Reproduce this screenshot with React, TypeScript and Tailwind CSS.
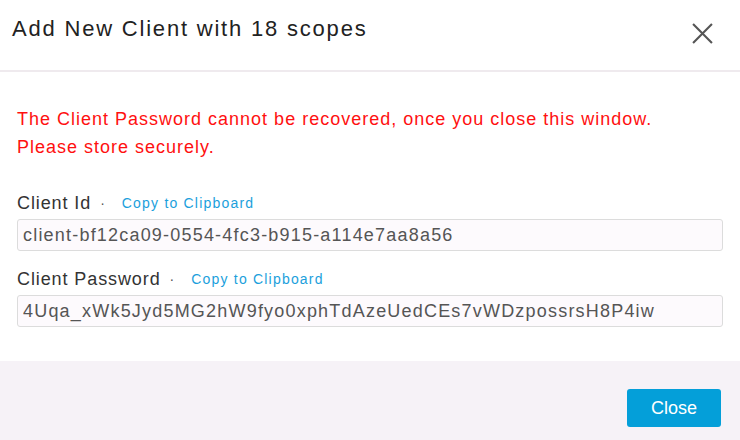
import React from 'react';

const Field = ({ label, value }: { label: string; value: string }) => (
  <div className="flex flex-col">
    <div className="flex h-6 items-center">
      <span className="text-[18px] tracking-[0.9px] text-[#333]">{label}</span>
      <span className="ml-[9px] text-[14px] text-[#555]">·</span>
      <button className="ml-[17px] text-[14px] tracking-[1.2px] text-[#1ba0dc]">Copy to Clipboard</button>
    </div>
    <input
      readOnly
      value={value}
      className="mt-1 h-8 w-full rounded-[3px] border border-[#dcdcdc] bg-[#fdfafd] px-[5px] text-[18px] tracking-[1.2px] text-[#555] outline-none"
    />
  </div>
);

const App = () => {
  return (
    <div className="flex h-[440px] w-[740px] flex-col bg-white font-['Liberation_Sans',Arial,sans-serif]">
      <div className="flex h-[72px] shrink-0 items-start justify-between border-b-2 border-[#efeaee] pl-[12px] pr-[27px] pt-[14px]">
        <h1 className="text-[22px] leading-[30px] tracking-[1.8px] text-[#222]">Add New Client with 18 scopes</h1>
        <button className="mt-[9px] text-[#555]">
          <svg width="21" height="21" viewBox="0 0 20 20" fill="none" stroke="currentColor" strokeWidth="2">
            <path d="M1 1L19 19M19 1L1 19" />
          </svg>
        </button>
      </div>

      <div className="flex flex-1 flex-col px-[17px] pt-[33px]">
        <p className="text-[18px] leading-[28px] tracking-[1px] text-[#ff1010]">
          The Client Password cannot be recovered, once you close this window.
          <br />
          Please store securely.
        </p>
        <div className="mt-[30px] flex flex-col gap-[16px]">
          <Field label="Client Id" value="client-bf12ca09-0554-4fc3-b915-a114e7aa8a56" />
          <Field label="Client Password" value="4Uqa_xWk5Jyd5MG2hW9fyo0xphTdAzeUedCEs7vWDzpossrsH8P4iw" />
        </div>
      </div>

      <div className="flex h-[79px] shrink-0 items-start justify-end bg-[#f6f2f7] pr-[19px] pt-[28px]">
        <button className="h-[38px] w-[94px] rounded-[3px] bg-[#049fd9] text-[18px] text-white">Close</button>
      </div>
    </div>
  );
};

export default App;
